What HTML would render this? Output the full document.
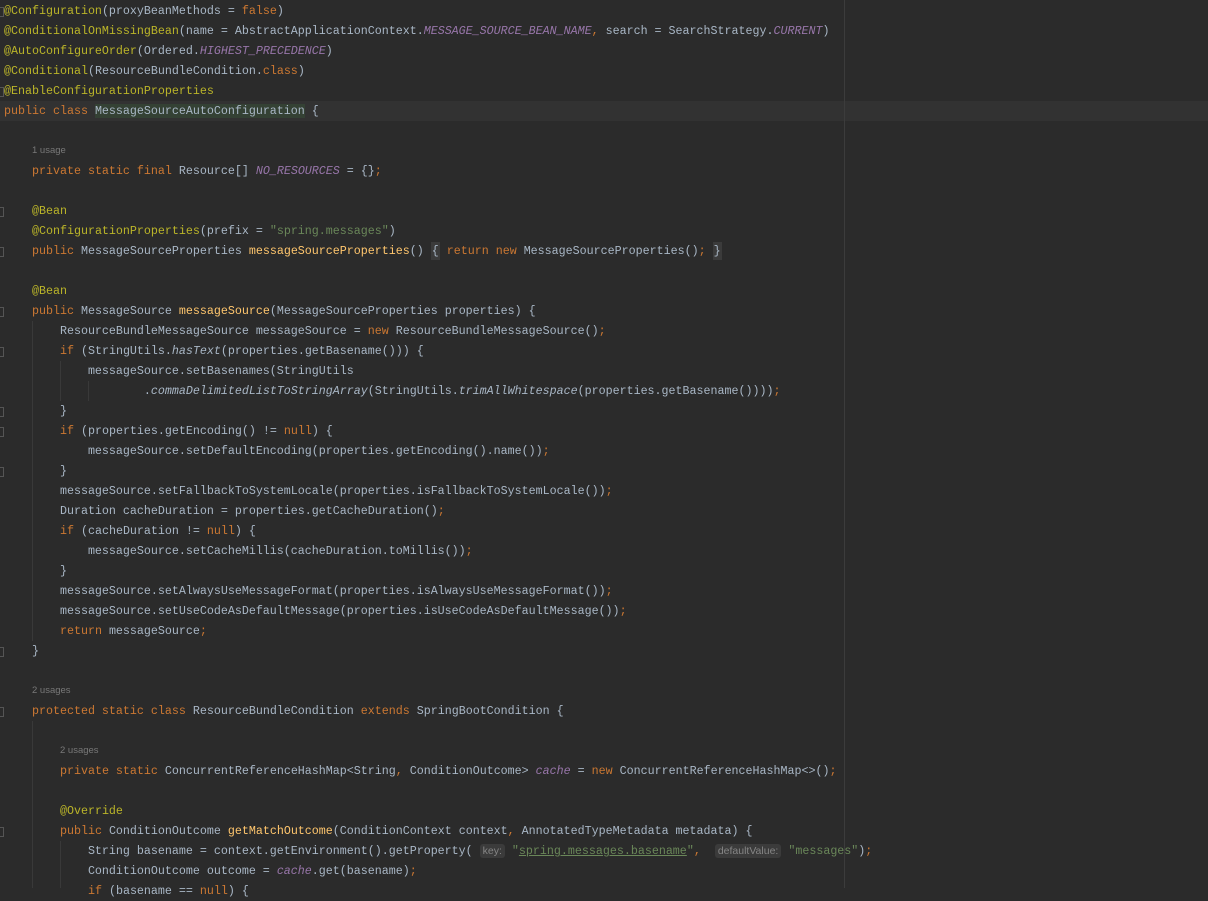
<!DOCTYPE html>
<html><head><meta charset="utf-8">
<style>
html,body{margin:0;padding:0;}
body{width:1208px;height:888px;background:#2b2b2b;overflow:hidden;position:relative;font-family:"Liberation Mono",monospace;font-size:11.67px;color:#a9b7c6;}
.l{position:absolute;left:4px;height:20px;line-height:20px;white-space:pre;}
.k{color:#cc7832}.a{color:#bbb529}.m{color:#ffc66d}.s{color:#6a8759}.f{color:#9876aa;font-style:italic}.i{font-style:italic}
.u{position:absolute;font-family:"Liberation Sans",sans-serif;font-size:9.5px;color:#787878;height:20px;line-height:20px;}
.hint{font-family:"Liberation Sans",sans-serif;font-size:10.5px;color:#858585;background:#3b3b3b;border-radius:3px;padding:1px 3px;}
.fb{background:#3b3b3b;padding:2px 1px;}
.g{position:absolute;width:1px;background:#393939;}
.fm{position:absolute;left:0;width:3px;height:8px;border:1px solid #555;border-left:none;}
</style></head><body>
<div style="position:absolute;left:0;top:101px;width:1208px;height:20px;background:#323232"></div>
<div style="position:absolute;left:844px;top:0;width:1px;height:888px;background:#3c3c3c"></div>
<div class="g" style="left:32px;top:321px;height:320px"></div>
<div class="g" style="left:60px;top:361px;height:40px"></div>
<div class="g" style="left:88px;top:381px;height:20px"></div>
<div class="g" style="left:32px;top:721px;height:167px"></div>
<div class="g" style="left:60px;top:841px;height:47px"></div>
<div class="fm" style="top:7px"></div><div class="fm" style="top:87px"></div>
<div class="fm" style="top:207px"></div><div class="fm" style="top:247px"></div>
<div class="fm" style="top:307px"></div><div class="fm" style="top:347px"></div>
<div class="fm" style="top:407px"></div><div class="fm" style="top:427px"></div>
<div class="fm" style="top:467px"></div><div class="fm" style="top:647px"></div>
<div class="fm" style="top:707px"></div><div class="fm" style="top:827px"></div>

<div class="l" style="top:1px"><span class="a">@Configuration</span>(proxyBeanMethods = <span class="k">false</span>)</div>
<div class="l" style="top:21px"><span class="a">@ConditionalOnMissingBean</span>(name = AbstractApplicationContext.<span class="f">MESSAGE_SOURCE_BEAN_NAME</span><span class="k">,</span> search = SearchStrategy.<span class="f">CURRENT</span>)</div>
<div class="l" style="top:41px"><span class="a">@AutoConfigureOrder</span>(Ordered.<span class="f">HIGHEST_PRECEDENCE</span>)</div>
<div class="l" style="top:61px"><span class="a">@Conditional</span>(ResourceBundleCondition.<span class="k">class</span>)</div>
<div class="l" style="top:81px"><span class="a">@EnableConfigurationProperties</span></div>
<div class="l" style="top:101px"><span class="k">public class </span><span style="background:#344134">MessageSourceAutoConfiguration</span> {</div>
<div class="u" style="left:32px;top:141px">1 usage</div>
<div class="l" style="top:161px">    <span class="k">private static final </span>Resource[] <span class="f">NO_RESOURCES</span> = {}<span class="k">;</span></div>
<div class="l" style="top:201px">    <span class="a">@Bean</span></div>
<div class="l" style="top:221px">    <span class="a">@ConfigurationProperties</span>(prefix = <span class="s">"spring.messages"</span>)</div>
<div class="l" style="top:241px">    <span class="k">public </span>MessageSourceProperties <span class="m">messageSourceProperties</span>() <span class="fb">{</span> <span class="k">return new </span>MessageSourceProperties()<span class="k">;</span> <span class="fb">}</span></div>
<div class="l" style="top:281px">    <span class="a">@Bean</span></div>
<div class="l" style="top:301px">    <span class="k">public </span>MessageSource <span class="m">messageSource</span>(MessageSourceProperties properties) {</div>
<div class="l" style="top:321px">        ResourceBundleMessageSource messageSource = <span class="k">new </span>ResourceBundleMessageSource()<span class="k">;</span></div>
<div class="l" style="top:341px">        <span class="k">if </span>(StringUtils.<span class="i">hasText</span>(properties.getBasename())) {</div>
<div class="l" style="top:361px">            messageSource.setBasenames(StringUtils</div>
<div class="l" style="top:381px">                    .<span class="i">commaDelimitedListToStringArray</span>(StringUtils.<span class="i">trimAllWhitespace</span>(properties.getBasename())))<span class="k">;</span></div>
<div class="l" style="top:401px">        }</div>
<div class="l" style="top:421px">        <span class="k">if </span>(properties.getEncoding() != <span class="k">null</span>) {</div>
<div class="l" style="top:441px">            messageSource.setDefaultEncoding(properties.getEncoding().name())<span class="k">;</span></div>
<div class="l" style="top:461px">        }</div>
<div class="l" style="top:481px">        messageSource.setFallbackToSystemLocale(properties.isFallbackToSystemLocale())<span class="k">;</span></div>
<div class="l" style="top:501px">        Duration cacheDuration = properties.getCacheDuration()<span class="k">;</span></div>
<div class="l" style="top:521px">        <span class="k">if </span>(cacheDuration != <span class="k">null</span>) {</div>
<div class="l" style="top:541px">            messageSource.setCacheMillis(cacheDuration.toMillis())<span class="k">;</span></div>
<div class="l" style="top:561px">        }</div>
<div class="l" style="top:581px">        messageSource.setAlwaysUseMessageFormat(properties.isAlwaysUseMessageFormat())<span class="k">;</span></div>
<div class="l" style="top:601px">        messageSource.setUseCodeAsDefaultMessage(properties.isUseCodeAsDefaultMessage())<span class="k">;</span></div>
<div class="l" style="top:621px">        <span class="k">return </span>messageSource<span class="k">;</span></div>
<div class="l" style="top:641px">    }</div>
<div class="u" style="left:32px;top:681px">2 usages</div>
<div class="l" style="top:701px">    <span class="k">protected static class </span>ResourceBundleCondition <span class="k">extends </span>SpringBootCondition {</div>
<div class="u" style="left:60px;top:741px">2 usages</div>
<div class="l" style="top:761px">        <span class="k">private static </span>ConcurrentReferenceHashMap&lt;String<span class="k">, </span>ConditionOutcome&gt; <span class="f">cache</span> = <span class="k">new </span>ConcurrentReferenceHashMap&lt;&gt;()<span class="k">;</span></div>
<div class="l" style="top:801px">        <span class="a">@Override</span></div>
<div class="l" style="top:821px">        <span class="k">public </span>ConditionOutcome <span class="m">getMatchOutcome</span>(ConditionContext context<span class="k">, </span>AnnotatedTypeMetadata metadata) {</div>
<div class="l" style="top:841px">            String basename = context.getEnvironment().getProperty( <span class="hint">key:</span> <span class="s">"<span style="text-decoration:underline">spring.messages.basename</span>"</span><span class="k">,</span>  <span class="hint">defaultValue:</span> <span class="s">"messages"</span>)<span class="k">;</span></div>
<div class="l" style="top:861px">            ConditionOutcome outcome = <span class="f">cache</span>.get(basename)<span class="k">;</span></div>
<div class="l" style="top:881px">            <span class="k">if </span>(basename == <span class="k">null</span>) {</div>
</body></html>
